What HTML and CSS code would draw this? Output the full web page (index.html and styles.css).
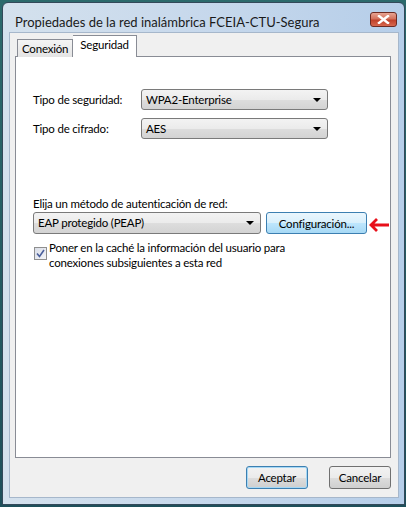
FILE: index.html
```html
<!DOCTYPE html>
<html lang="es">
<head>
    <meta charset="UTF-8">
    <title>Propiedades de la red inalámbrica</title>
    <link rel="stylesheet" href="styles.css">
</head>
<body>
    <div class="window">
        <!-- Title bar -->
        <div class="titlebar">
            <span class="title">Propiedades de la red inalámbrica FCEIA-CTU-Segura</span>
            <div class="close-btn">
                <svg width="13" height="9" viewBox="0 0 13 9">
                    <path d="M2 1 L11 8 M11 1 L2 8" stroke="#fff" stroke-width="2.4" stroke-linecap="square"/>
                </svg>
            </div>
        </div>

        <!-- Client area -->
        <div class="client">
            <div class="tabs">
                <div class="tab">Conexión</div>
                <div class="tab active">Seguridad</div>
            </div>
            <div class="panel">
                <div class="form-row first">
                    <span class="label">Tipo de seguridad:</span>
                    <div class="select wide">WPA2-Enterprise<span class="arrow"></span></div>
                </div>
                <div class="form-row">
                    <span class="label">Tipo de cifrado:</span>
                    <div class="select wide">AES<span class="arrow"></span></div>
                </div>

                <div class="auth-title">Elija un método de autenticación de red:</div>
                <div class="auth-row">
                    <div class="select method">EAP protegido (PEAP)<span class="arrow"></span></div>
                    <div class="button config">Configuración...</div>
                    <svg class="red-arrow" width="22" height="16" viewBox="0 0 22 16">
                        <path d="M21 8 H3 M9 2 L3 8 L9 14" fill="none" stroke="#e8101a" stroke-width="2.8"/>
                    </svg>
                </div>
                <div class="check-row">
                    <span class="checkbox">
                        <svg width="9" height="9" viewBox="0 0 9 9">
                            <path d="M1 4.5 L3.5 7.5 L8 1" fill="none" stroke="#4a5f9c" stroke-width="1.6"/>
                        </svg>
                    </span>
                    <span class="check-text">Poner en la caché la información del usuario para<br>conexiones subsiguientes a esta red</span>
                </div>
            </div>
            <div class="actions">
                <div class="button default">Aceptar</div>
                <div class="button">Cancelar</div>
            </div>
        </div>
    </div>
</body>
</html>
```

FILE: styles.css
```css
body {
    margin: 0;
    width: 406px;
    height: 507px;
    background: linear-gradient(180deg, #2c6a6c 0%, #1e4f5a 100%);
    font-family: Lato, "Noto Sans", sans-serif;
    font-size: 11.5px;
    letter-spacing: -0.2px;
    color: #000;
    overflow: hidden;
}
.window {
    margin: 2px 1px 0 2px;
    height: 503px;
    border: 1px solid #33495a;
    border-radius: 6px 6px 0 0;
    background: linear-gradient(90deg, #d4e1ed 0%, #c8d9ec 45%, #b6cee9 100%);
    box-sizing: border-box;
    display: flex;
    flex-direction: column;
}
.titlebar {
    height: 29px;
    display: flex;
    align-items: flex-start;
    justify-content: space-between;
    padding: 0 7px 0 12px;
}
.title {
    margin-top: 11px;
    font-size: 13px;
    letter-spacing: 0;
    color: #1a1a1a;
}
.close-btn {
    margin-top: 9px;
    width: 27px;
    height: 15px;
    box-sizing: border-box;
    border: 1px solid #6d2a22;
    border-radius: 3px;
    background: linear-gradient(180deg, #e8a493 0%, #d3715c 45%, #c0412a 55%, #d7684f 100%);
    display: flex;
    align-items: center;
    justify-content: center;
}
.client {
    flex: 1;
    margin: 0 5px 6px 6px;
    background: #f0f0f0;
    border: 1px solid #a6b7cb;
    padding: 3px 7px 0 5px;
    display: flex;
    flex-direction: column;
}
.tabs {
    display: flex;
    align-items: flex-end;
    height: 21px;
    padding-left: 2px;
    position: relative;
    z-index: 1;
    margin-bottom: -1px;
}
.tab {
    height: 18px;
    padding: 0 4px;
    border: 1px solid #898c95;
    border-bottom: none;
    background: linear-gradient(180deg, #f4f4f4 0%, #e4e4e4 100%);
    line-height: 18px;
    box-sizing: border-box;
}
.tab.active {
    height: 22px;
    background: #fff;
    border-left: none;
    padding: 0 7px;
    line-height: 18px;
}
.panel {
    height: 402px;
    background: #fff;
    border: 1px solid #898c95;
    box-sizing: border-box;
    padding: 0 0 0 17px;
}
.form-row {
    display: flex;
    align-items: center;
    margin-top: 8px;
}
.form-row.first {
    margin-top: 32px;
}
.label {
    width: 108px;
}
.select {
    height: 21px;
    box-sizing: border-box;
    border: 1px solid #7a7a7a;
    border-radius: 3px;
    background: linear-gradient(180deg, #f3f3f3 0%, #ebebeb 50%, #dddddd 51%, #d3d3d3 100%);
    padding: 0 0 0 4px;
    line-height: 19px;
    position: relative;
}
.select.wide {
    width: 187px;
}
.select.method {
    width: 228px;
}
.arrow {
    position: absolute;
    right: 6px;
    top: 8px;
    width: 0;
    height: 0;
    border-left: 4px solid transparent;
    border-right: 4px solid transparent;
    border-top: 4px solid #000;
}
.auth-title {
    margin-top: 57px;
    line-height: 16px;
}
.auth-row {
    display: flex;
    align-items: center;
}
.auth-row .select {
    height: 22px;
    line-height: 20px;
}
.button {
    height: 22px;
    box-sizing: border-box;
    border: 1px solid #707070;
    border-radius: 3px;
    background: linear-gradient(180deg, #f2f2f2 0%, #ebebeb 50%, #dddddd 51%, #cfcfcf 100%);
    display: flex;
    align-items: center;
    justify-content: center;
}
.button.config {
    margin-left: 5px;
    width: 101px;
    border-color: #3c7fb1;
    background: linear-gradient(180deg, #eaf6fd 0%, #d9f0fc 50%, #bee6fd 51%, #a7d9f5 100%);
}
.red-arrow {
    margin-left: 1px;
    margin-top: 3px;
}
.check-row {
    display: flex;
    align-items: flex-start;
    margin-top: 6px;
    margin-left: 1px;
}
.checkbox {
    margin-top: 7px;
    width: 13px;
    height: 13px;
    box-sizing: border-box;
    border: 1px solid #8f8f8f;
    background: linear-gradient(135deg, #d9dde7 0%, #f4f5f8 100%);
    display: flex;
    align-items: center;
    justify-content: center;
}
.check-text {
    margin-left: 2px;
    line-height: 15px;
}
.actions {
    display: flex;
    justify-content: flex-end;
    gap: 21px;
    margin-top: 8px;
}
.actions .button {
    width: 62px;
    height: 23px;
}
.button.default {
    border-color: #3c7fb1;
    box-shadow: inset 0 0 0 1px #a6d8f5;
}
```
